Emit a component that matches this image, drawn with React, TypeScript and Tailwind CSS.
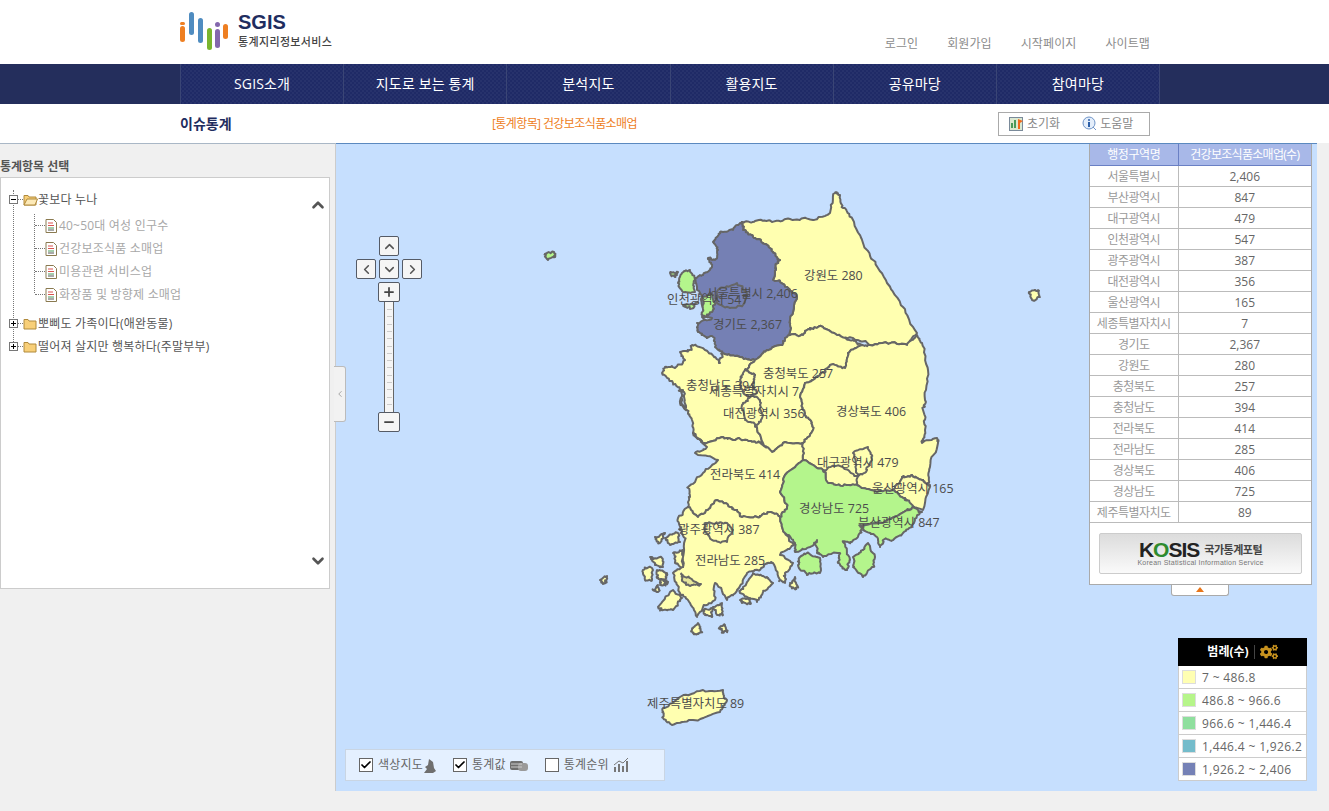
import { Check, ChevronDown, ChevronLeft, ChevronRight, ChevronUp, Minus, Plus } from "lucide-react";
import { FaCogs } from "react-icons/fa";

const navItems = ["SGIS소개", "지도로 보는 통계", "분석지도", "활용지도", "공유마당", "참여마당"];

const rows = [
  ["서울특별시", "2,406"],
  ["부산광역시", "847"],
  ["대구광역시", "479"],
  ["인천광역시", "547"],
  ["광주광역시", "387"],
  ["대전광역시", "356"],
  ["울산광역시", "165"],
  ["세종특별자치시", "7"],
  ["경기도", "2,367"],
  ["강원도", "280"],
  ["충청북도", "257"],
  ["충청남도", "394"],
  ["전라북도", "414"],
  ["전라남도", "285"],
  ["경상북도", "406"],
  ["경상남도", "725"],
  ["제주특별자치도", "89"],
];

const legend = [
  ["bg-[#ffffb2]", "7 ~ 486.8"],
  ["bg-[#b6f58a]", "486.8 ~ 966.6"],
  ["bg-[#8fdf9e]", "966.6 ~ 1,446.4"],
  ["bg-[#74bccb]", "1,446.4 ~ 1,926.2"],
  ["bg-[#7581b6]", "1,926.2 ~ 2,406"],
];

const YELLOW = "#ffffb0";
const GREEN = "#b4f58c";
const BLUE = "#7580b4";

// outlines in page coordinates, the svg viewBox starts at the map's corner
const regions: [string, string][] = [
  [YELLOW, "742,222 755,221 772,222 790,219 813,220 830,213 835,193 840,195 843,208 853,220 863,243 873,260 887,283 903,307 917,333 907,345 887,343 870,345 853,338 837,335 823,327 810,328 803,335 790,335 790,320 797,297 787,287 773,280 775,268 780,260 773,252 763,243 753,237 743,230"],
  [BLUE, "742,222 733,230 720,232 713,242 718,250 715,260 708,258 712,267 703,275 695,278 697,290 702,297 702,317 712,318 697,323 698,332 707,337 713,337 715,347 722,353 740,357 755,360 767,350 780,345 790,335 790,320 797,297 787,287 773,280 775,268 780,260 773,252 763,243 753,237 743,230"],
  [BLUE, "718,290 737,283 747,293 743,305 730,308 717,303"],
  [GREEN, "702,297 712,293 715,303 712,312 705,317 702,315"],
  [GREEN, "682,273 690,270 695,280 695,292 683,292 678,283"],
  [GREEN, "683,305 698,302 690,309"],
  [GREEN, "670,273 678,272 675,277"],
  [GREEN, "545,254 554,252 555,257 548,260"],
  [YELLOW, "1029,292 1038,290 1040,297 1032,300"],
  // chungnam
  [YELLOW, "720,363 715,357 705,350 692,345 690,350 680,352 685,360 675,368 665,367 662,373 673,383 683,390 680,403 687,410 692,420 693,433 705,443 722,437 733,440 747,440 758,442 763,443 757,427 753,417 757,405 752,395 745,385 755,375 745,370 755,360 740,357 722,353"],
  ["#c6dffe", "680,390 684,392 686,408 682,404"],
  // chungbuk
  [YELLOW, "755,360 767,350 780,345 790,335 803,335 810,328 823,327 837,335 853,340 862,345 848,353 845,368 830,365 823,372 813,380 805,383 800,397 805,413 812,423 813,430 803,443 783,443 772,452 763,443 757,427 753,417 757,405 752,395 745,385 755,375 745,370"],
  [YELLOW, "745,370 755,375 752,385 757,393 750,398 743,392 740,380"],
  [YELLOW, "752,395 760,400 763,415 757,425 745,420 742,405 748,398"],
  // gyeongbuk
  [YELLOW, "862,345 870,345 887,343 907,345 917,335 922,343 928,370 925,400 923,410 925,430 922,443 937,438 938,443 930,467 928,485 923,480 912,475 902,477 893,490 877,492 857,485 843,486 828,483 823,470 803,460 803,443 813,430 812,423 805,413 800,397 805,383 813,380 823,372 830,365 845,368 848,353"],
  [YELLOW, "828,483 843,486 857,485 856,470 853,453 868,447 872,460 866,472 857,476 840,466 823,470"],
  [YELLOW, "893,490 902,477 912,475 923,480 930,485 923,510 913,507 905,498"],
  // jeonbuk
  [YELLOW, "693,433 705,443 722,437 733,440 747,440 758,442 772,452 783,443 803,443 803,460 785,475 780,492 787,507 780,517 770,512 760,517 742,517 735,510 730,507 717,500 708,510 698,517 688,507 690,497 688,487 703,473 718,460 695,453 707,447 700,440"],
  // jeonnam
  [YELLOW, "688,507 698,517 708,510 717,500 730,507 735,510 742,517 760,517 770,512 780,517 785,533 794,545 780,555 793,563 785,573 785,583 780,580 773,563 767,563 760,570 747,573 737,590 727,600 715,583 715,600 703,607 697,617 690,603 680,593 673,573 683,567 685,540 680,530 678,518"],
  ["#e6e69a", "681,574 690,578 701,584 690,586 682,581"],
  [YELLOW, "705,532 705,523 717,523 727,523 733,530 727,542 712,540"],
  [YELLOW, "743,587 753,573 767,577 773,583 763,592 757,602 740,593"],
  [YELLOW, "740,600 750,598 750,603 742,603"],
  [YELLOW, "790,583 795,577 798,587 792,588"],
  [YELLOW, "658,607 673,590 682,598 673,610 663,610"],
  [YELLOW, "643,570 652,568 652,580 645,580"],
  [YELLOW, "657,570 667,573 665,580 657,578"],
  [YELLOW, "650,557 662,558 663,567 655,565"],
  [YELLOW, "655,537 665,533 660,543"],
  [YELLOW, "665,538 678,533 680,542 670,545"],
  [YELLOW, "673,553 683,550 683,567 675,563"],
  [YELLOW, "660,580 668,582 665,585 660,585"],
  [YELLOW, "653,590 658,585 658,592"],
  [YELLOW, "703,610 712,608 712,617 705,615"],
  [YELLOW, "713,607 722,603 723,615 717,615"],
  [YELLOW, "692,630 698,623 702,632 695,634"],
  [YELLOW, "720,627 725,625 727,632 722,632"],
  [YELLOW, "600,580 607,576 606,582 603,584"],
  // gyeongnam
  [GREEN, "803,460 823,470 828,483 843,486 857,485 877,492 893,490 905,498 915,508 907,510 883,523 863,525 860,533 850,543 843,542 850,560 847,570 838,563 840,553 823,557 817,553 817,540 810,547 795,552 795,543 785,533 780,517 787,507 780,492 785,475"],
  [GREEN, "853,557 863,550 868,543 875,557 873,567 863,577 853,567"],
  [GREEN, "800,557 807,553 820,558 820,573 807,575 798,565"],
  [GREEN, "915,508 922,512 912,525 903,533 893,540 883,540 880,547 877,537 863,530 860,525 883,523 907,510"],
  // jeju
  [YELLOW, "663,708 680,697 703,690 723,690 727,700 720,712 693,720 672,725 663,718"],
];

// jagged coast: the offset depends only on the midpoint, so shared borders stay shared
function jag(x: number, y: number) {
  const h = Math.sin(x * 12.9898 + y * 78.233) * 43758.5453;
  return (h - Math.floor(h) - 0.5) * 2.2;
}

function split(a: number[], b: number[], depth: number): number[][] {
  if (depth === 0) return [a];
  const mx = (a[0] + b[0]) / 2;
  const my = (a[1] + b[1]) / 2;
  const m = [mx + jag(mx, my), my + jag(my, mx)];
  return [...split(a, m, depth - 1), ...split(m, b, depth - 1)];
}

function rough(points: string) {
  const pts = points.split(" ").map((p) => p.split(",").map(Number));
  return pts
    .flatMap((p, i) => split(p, pts[(i + 1) % pts.length], 3))
    .map((p) => p[0].toFixed(1) + "," + p[1].toFixed(1))
    .join(" ");
}

const mapLabels = [
  ["강원도 280", "left-[468px] top-[123px]"],
  ["인천광역시 547", "left-[331px] top-[147px]"],
  ["서울특별시 2,406", "left-[370px] top-[141px]"],
  ["경기도 2,367", "left-[377px] top-[172px]"],
  ["충청북도 257", "left-[427px] top-[221px]"],
  ["충청남도 394", "left-[350px] top-[233px]"],
  ["세종특별자치시 7", "left-[373px] top-[239px]"],
  ["대전광역시 356", "left-[387px] top-[261px]"],
  ["경상북도 406", "left-[500px] top-[259px]"],
  ["대구광역시 479", "left-[481px] top-[310px]"],
  ["전라북도 414", "left-[374px] top-[322px]"],
  ["울산광역시 165", "left-[536px] top-[336px]"],
  ["경상남도 725", "left-[463px] top-[356px]"],
  ["부산광역시 847", "left-[522px] top-[370px]"],
  ["광주광역시 387", "left-[342px] top-[377px]"],
  ["전라남도 285", "left-[359px] top-[408px]"],
  ["제주특별자치도 89", "left-[311px] top-[551px]"],
];

function Logo() {
  return (
    <svg width="50" height="40" viewBox="0 0 50 40" className="mt-[11px]">
      <rect x="0" y="11" width="5" height="3" rx="1.5" fill="#ee7f22" />
      <rect x="0" y="15" width="5" height="16" rx="2.5" fill="#ee7f22" />
      <rect x="9" y="1" width="5" height="23" rx="2.5" fill="#4f8cc0" />
      <rect x="18" y="7" width="5" height="25" rx="2.5" fill="#4f8cc0" />
      <rect x="27" y="17" width="5" height="22" rx="2.5" fill="#7ab52e" />
      <rect x="35" y="11" width="5" height="5" rx="2.5" fill="#8467ad" />
      <rect x="35" y="18" width="5" height="19" rx="2.5" fill="#8467ad" />
      <rect x="43" y="13" width="5" height="15" rx="2.5" fill="#ee7f22" />
    </svg>
  );
}

function FolderIcon({ open }: { open?: boolean }) {
  return (
    <svg width="15" height="12" viewBox="0 0 15 12" className="shrink-0">
      <path d="M1 3V1.5h4L6 3h7v8H1z" fill="#f8cf78" stroke="#b08a3c" />
      {open && <path d="M1 11l3-6h10.5L12 11z" fill="#fdeab8" stroke="#b08a3c" />}
    </svg>
  );
}

function DocIcon() {
  return (
    <svg width="12" height="14" viewBox="0 0 12 14" className="shrink-0">
      <path d="M1 .5h7.5l3 3v10H1z" fill="#fff" stroke="#8a7a50" />
      <path d="M3 4h5M3 6.5h6" stroke="#d9534f" />
      <path d="M3 9h6" stroke="#4a9a5a" />
      <path d="M3 11h6" stroke="#555" />
    </svg>
  );
}

function Toggle({ open }: { open?: boolean }) {
  return (
    <span className="relative z-10 flex h-[9px] w-[9px] shrink-0 items-center justify-center border border-[#777] bg-white">
      <span className="absolute h-px w-[5px] bg-black" />
      {!open && <span className="absolute h-[5px] w-px bg-black" />}
    </span>
  );
}

function ZoomButton({ children, wide }: { children: React.ReactNode; wide?: boolean }) {
  return (
    <div
      className={`flex h-5 items-center justify-center rounded-[2px] border border-[#555b66] bg-[#f5f5f5] text-[#555] ${
        wide ? "w-[22px]" : "w-5"
      }`}
    >
      {children}
    </div>
  );
}

function CheckItem({ label, checked, children }: { label: string; checked?: boolean; children: React.ReactNode }) {
  return (
    <div className="flex items-center">
      <span className="flex h-[14px] w-[14px] items-center justify-center border border-[#666] bg-white">
        {checked && <Check size={14} strokeWidth={3.5} className="text-black" />}
      </span>
      <span className="ml-[5px] text-xs tracking-[0.2px] text-[#666]">{label}</span>
      {children}
    </div>
  );
}

export default function App() {
  return (
    <div className="flex h-[811px] w-[1329px] flex-col overflow-hidden bg-[#f0f0f0] font-['Open_Sans','Noto_Sans_CJK_KR',sans-serif]">
      {/* Top header */}
      <header className="h-16 bg-white pl-[180px]">
        <div className="flex w-[970px] items-start">
          <Logo />
          <div className="ml-2 mt-[11px]">
            <div className="font-['Liberation_Sans',sans-serif] text-[20px] font-bold leading-[23px] text-[#1f2d5f]">SGIS</div>
            <div className="mt-px text-[11px] font-medium leading-[13px] tracking-[0.35px] text-[#444]">통계지리정보서비스</div>
          </div>
          <nav className="ml-auto mt-[35px] flex gap-[29px] text-xs leading-[18px] tracking-[0.1px] text-[#8c8c8c]">
            <span>로그인</span>
            <span>회원가입</span>
            <span>시작페이지</span>
            <span>사이트맵</span>
          </nav>
        </div>
      </header>

      {/* Main nav */}
      <div className="h-10 bg-[#242e5c] pl-[180px]">
        <div className="grid h-10 w-[980px] grid-cols-6 border-r border-[#3a4575] bg-[#212b68] bg-[image:repeating-conic-gradient(#1f2a66_0_25%,#27326c_0_50%)] bg-[size:4px_4px]">
          {navItems.map((item) => (
            <div key={item} className="flex items-center justify-center border-l border-[#3a4575] text-sm tracking-[0.15px] text-white">
              {item}
            </div>
          ))}
        </div>
      </div>

      {/* Sub bar */}
      <div className="flex h-[39px] items-center bg-white pl-[180px]">
        <span className="w-[312px] text-sm font-bold text-[#1f2d5f]">이슈통계</span>
        <span className="w-[506px] text-xs tracking-[-0.6px] text-[#ee7d22]">[통계항목] 건강보조식품소매업</span>
        <div className="flex h-6 w-[152px] items-center gap-[22px] border border-[#aaa] pl-[10px] text-xs text-[#888]">
          <div className="flex items-center gap-1">
            <svg width="14" height="14" viewBox="0 0 14 14">
              <rect x="0.5" y="0.5" width="13" height="13" fill="#dbe8d0" stroke="#7a8a9a" />
              <path d="M3 11V6M6 11V3" stroke="#4a9a5a" strokeWidth="2" />
              <path d="M9 2l5 2-3 2v6H9z" fill="#f26a1b" />
            </svg>
            초기화
          </div>
          <div className="flex items-center gap-[3px]">
            <svg width="15" height="15" viewBox="0 0 15 15">
              <circle cx="7" cy="7" r="6" fill="#e4eefb" stroke="#6f94c8" />
              <path d="M11 11l3 3" stroke="#6f94c8" />
              <circle cx="7" cy="4" r="1" fill="#2c5fa8" />
              <path d="M7 6v5" stroke="#2c5fa8" strokeWidth="2" />
            </svg>
            도움말
          </div>
        </div>
      </div>

      <div className="flex h-[648px]">
        {/* Left panel */}
        <aside className="relative h-[648px] w-[336px] shrink-0 border-r border-t border-r-[#ccc] border-t-[#a9b7c6] bg-[#f0f0f0]">
          <h2 className="mt-[14px] text-xs font-bold leading-[18px] text-[#555]">통계항목 선택</h2>
          <div className="relative mt-px h-[412px] w-[330px] border border-[#ccc] bg-white pl-2 pt-[13px] text-xs tracking-[0.2px] text-[#555]">
            <span className="absolute left-[12px] top-[12px] h-[156px] border-l border-dotted border-[#777]" />
            <span className="absolute left-[33px] top-[36px] h-[79px] border-l border-dotted border-[#777]" />
            <div className="flex h-[17px] items-center">
              <Toggle open />
              <span className="w-[5px] border-t border-dotted border-[#777]" />
              <FolderIcon open />
              <span>꽃보다 누나</span>
            </div>
            {["40~50대 여성 인구수", "건강보조식품 소매업", "미용관련 서비스업", "화장품 및 방향제 소매업"].map((leaf, i) => (
              <div key={leaf} className={`flex h-[23px] items-center pl-[26px] text-[#a8a8a8] ${i === 0 ? "mt-[6px]" : ""}`}>
                <span className="w-[10px] border-t border-dotted border-[#777]" />
                <DocIcon />
                <span className="ml-[2px]">{leaf}</span>
              </div>
            ))}
            <div className="mt-[6px] flex h-[23px] items-center">
              <Toggle />
              <span className="w-[5px] border-t border-dotted border-[#777]" />
              <FolderIcon />
              <span>뽀삐도 가족이다(애완동물)</span>
            </div>
            <div className="flex h-[23px] items-center">
              <Toggle />
              <span className="w-[5px] border-t border-dotted border-[#777]" />
              <FolderIcon />
              <span>떨어져 살지만 행복하다(주말부부)</span>
            </div>
            <ChevronUp size={18} strokeWidth={3.5} className="absolute left-[308px] top-[18px] text-[#555]" />
            <ChevronDown size={18} strokeWidth={3.5} className="absolute left-[308px] top-[374px] text-[#555]" />
          </div>
        </aside>

        {/* Map */}
        <main className="relative h-[648px] w-[981px] shrink-0 border-t border-[#5b89bf] bg-[#c6dffe]">
          <svg width="981" height="647" viewBox="336 144 981 647" className="absolute left-0 top-0">
            {regions.map(([fill, pts], i) => (
              <polygon key={i} points={rough(pts)} fill={fill} stroke="#666" strokeWidth="2" strokeLinejoin="round" />
            ))}
          </svg>

          {mapLabels.map(([text, pos]) => (
            <span key={text} className={`absolute whitespace-nowrap text-[12.4px] leading-[18px] text-[#4c4c4c] ${pos}`}>
              {text}
            </span>
          ))}

          {/* Panel collapse handle */}
          <div className="absolute left-[-2px] top-[222px] flex h-[56px] w-[12px] items-center justify-center rounded-r-[3px] border border-l-0 border-[#bbb] bg-[#f2f2f2]">
            <ChevronLeft size={10} className="text-[#999]" />
          </div>

          {/* Pan and zoom */}
          <div className="absolute left-[20px] top-[92px] flex w-[66px] flex-col items-center">
            <ZoomButton>
              <ChevronUp size={15} strokeWidth={2.5} />
            </ZoomButton>
            <div className="mt-[3px] flex gap-[3px]">
              <ZoomButton>
                <ChevronLeft size={15} strokeWidth={2.5} />
              </ZoomButton>
              <ZoomButton>
                <ChevronDown size={15} strokeWidth={2.5} />
              </ZoomButton>
              <ZoomButton>
                <ChevronRight size={15} strokeWidth={2.5} />
              </ZoomButton>
            </div>
            <div className="mt-[3px]">
              <ZoomButton wide>
                <Plus size={14} strokeWidth={3} className="text-[#444]" />
              </ZoomButton>
            </div>
            <div className="flex h-[110px] w-[10px] flex-col items-center justify-around border-x border-[#666] bg-[#f5f5f5] py-1">
              {Array.from({ length: 14 }).map((_, i) => (
                <span key={i} className="h-px w-[5px] bg-[#ccc]" />
              ))}
            </div>
            <ZoomButton wide>
              <Minus size={14} strokeWidth={3} className="text-[#444]" />
            </ZoomButton>
          </div>

          {/* Layer toggles */}
          <div className="absolute left-[9px] top-[605px] flex h-8 w-[320px] items-center gap-[17px] border border-[#c9d5e3] bg-[#e4f0ff] pl-[13px]">
            <CheckItem label="색상지도" checked>
              <svg width="13" height="15" viewBox="0 0 13 15">
                <path d="M6 1l4 3 1 6 2 3-3 2H1l3-4-2-2 3-2z" fill="#6f6f6f" />
              </svg>
            </CheckItem>
            <CheckItem label="통계값" checked>
              <svg width="18" height="12" viewBox="0 0 18 12" className="ml-1">
                <rect x="0" y="2" width="13" height="9" rx="2" fill="#6f6f6f" />
                <rect x="8" y="4" width="10" height="8" rx="3" fill="#9a9a9a" />
                <path d="M1 5h11M1 8h11" stroke="#ccc" />
              </svg>
            </CheckItem>
            <CheckItem label="통계순위">
              <svg width="16" height="16" viewBox="0 0 16 16" className="ml-1">
                <path d="M2 15V10M6 15V7M10 15V9M14 15V4" stroke="#777" strokeWidth="2" />
                <path d="M1 8l5-4 4 2 5-5" stroke="#777" fill="none" />
              </svg>
            </CheckItem>
          </div>

          {/* Data table */}
          <div className="absolute left-[753px] top-0 w-[223px] text-xs">
            <div className="border-x border-b border-[#aaa] bg-white">
              <table className="w-full table-fixed border-collapse">
                <thead>
                  <tr className="h-[21px] bg-[#a8b8e8] text-white">
                    <th className="w-[88px] border-b border-r border-[#6a80c4] p-0 pt-[2px] font-normal tracking-[-0.4px]">행정구역명</th>
                    <th className="border-b border-[#6a80c4] p-0 pt-[2px] font-normal tracking-[-0.7px]">건강보조식품소매업(수)</th>
                  </tr>
                </thead>
                <tbody>
                  {rows.map(([name, value]) => (
                    <tr key={name} className="h-[21px] border-b border-[#bbb]">
                      <td className="border-r border-[#bbb] p-0 pt-[2px] text-center tracking-[-0.5px] text-[#999]">{name}</td>
                      <td className="p-0 pt-[2px] text-center text-[#666]">{value}</td>
                    </tr>
                  ))}
                </tbody>
              </table>
              <div className="px-[9px] pb-[10px] pt-[10px]">
                <div className="flex h-[41px] flex-col items-center justify-center rounded-[2px] border border-[#ccc] bg-gradient-to-b from-[#dcdcdc] to-[#fafafa]">
                  <div className="flex items-center gap-[5px] leading-[19px]">
                    <span className="font-['Liberation_Sans',sans-serif] text-[21px] font-bold tracking-[-1px] text-[#222]">
                      K<span className="text-[#2e8b2e]">O</span>SIS
                    </span>
                    <span className="text-[11px] font-bold tracking-[-0.5px] text-[#444]">국가통계포털</span>
                  </div>
                  <div className="font-['Liberation_Sans',sans-serif] text-[7px] leading-[8px] tracking-[0.25px] text-[#777]">
                    Korean Statistical Information Service
                  </div>
                </div>
              </div>
            </div>
            <div className="ml-[82px] flex h-[11px] w-[58px] items-center justify-center rounded-b-[3px] border border-t-0 border-[#aaa] bg-white">
              <span className="h-0 w-0 border-x-[4px] border-b-[5px] border-x-transparent border-b-[#e8761a]" />
            </div>
          </div>

          {/* Legend */}
          <div className="absolute left-[842px] top-[494px] w-[129px] text-xs">
            <div className="flex h-7 items-center justify-center gap-[5px] bg-black font-bold text-white">
              범례(수)
              <span className="h-[14px] w-px bg-[#444]" />
              <FaCogs size={18} className="text-[#c8921e]" />
            </div>
            <div className="border-x border-[#ccc] bg-white tracking-[0.35px] text-[#666]">
              {legend.map(([color, label]) => (
                <div key={label} className="flex h-[23px] items-center gap-[6px] whitespace-nowrap border-b border-[#ccc] pl-[3px]">
                  <span className={`h-[14px] w-[14px] shrink-0 border border-[#ddd] ${color}`} />
                  <span className="pt-px">{label}</span>
                </div>
              ))}
            </div>
          </div>
        </main>
      </div>
    </div>
  );
}
